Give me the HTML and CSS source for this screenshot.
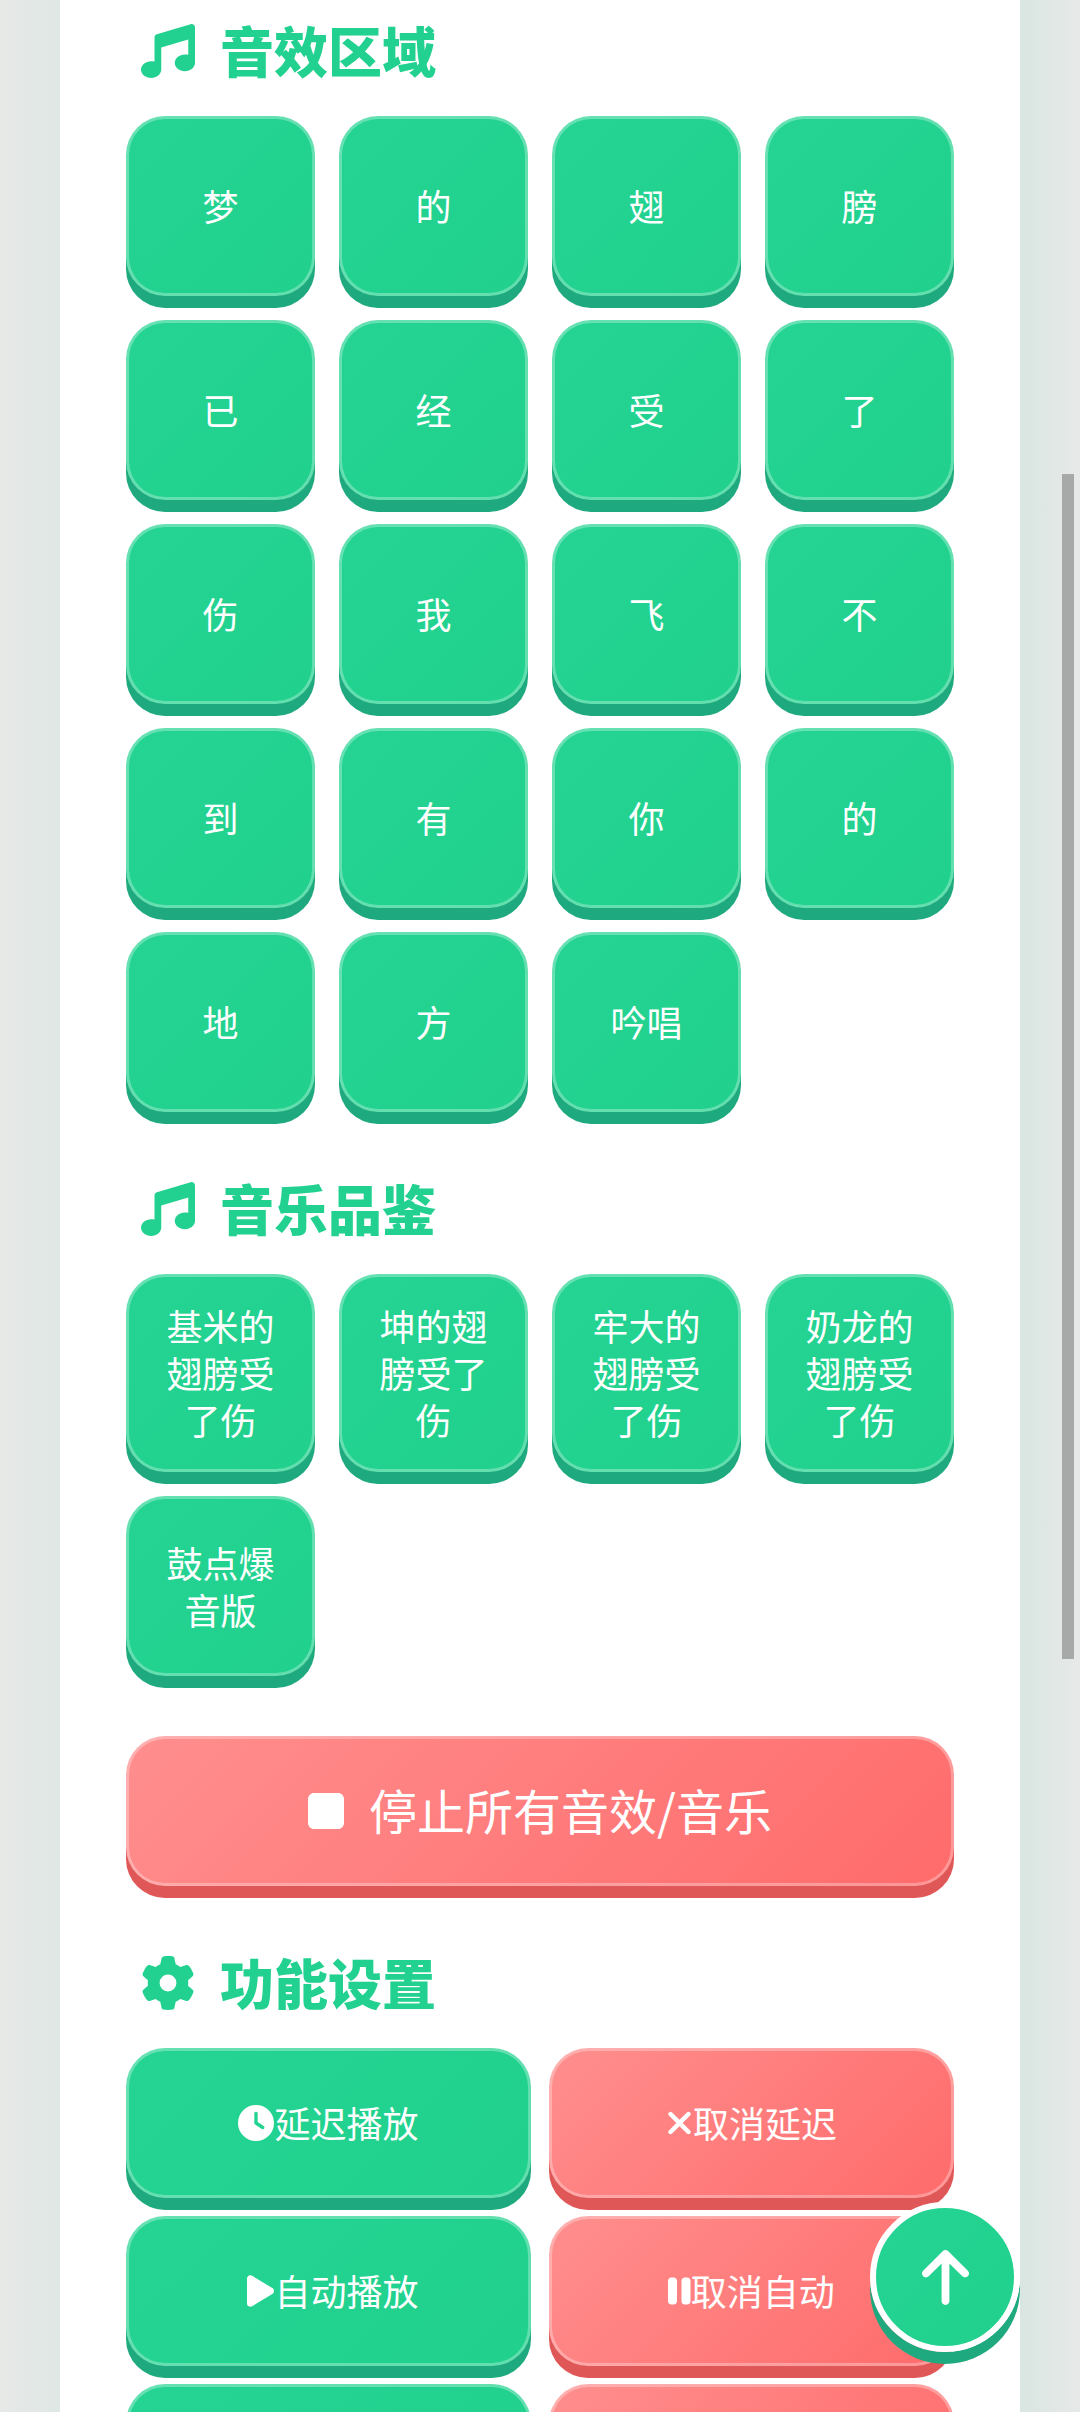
FILE: index.html
```html
<!DOCTYPE html>
<html lang="zh">
<head>
<meta charset="utf-8">
<title>音效</title>
<link rel="stylesheet" href="styles.css">
</head>
<body>
<main class="card">
  <section class="section">
    <h2 class="heading">
      <svg class="heading-icon" viewBox="0 0 512 512"><path d="M499.1 6.3c8.1 6 12.9 15.6 12.9 25.7v72V368c0 44.2-43 80-96 80s-96-35.8-96-80s43-80 96-80c11.2 0 22 1.6 32 4.6V147L192 223.8V432c0 44.2-43 80-96 80s-96-35.8-96-80s43-80 96-80c11.2 0 22 1.6 32 4.6V200 128c0-14.1 9.3-26.6 22.8-30.7l320-96c9.7-2.9 20.2-1.1 28.3 5z"/></svg>
      <span class="heading-text">音效区域</span>
    </h2>
    <div class="sound-grid">
      <button class="btn green">梦</button><button class="btn green">的</button><button class="btn green">翅</button><button class="btn green">膀</button>
      <button class="btn green">已</button><button class="btn green">经</button><button class="btn green">受</button><button class="btn green">了</button>
      <button class="btn green">伤</button><button class="btn green">我</button><button class="btn green">飞</button><button class="btn green">不</button>
      <button class="btn green">到</button><button class="btn green">有</button><button class="btn green">你</button><button class="btn green">的</button>
      <button class="btn green">地</button><button class="btn green">方</button><button class="btn green">吟唱</button>
    </div>
  </section>

  <section class="section section-tight">
    <h2 class="heading">
      <svg class="heading-icon" viewBox="0 0 512 512"><path d="M499.1 6.3c8.1 6 12.9 15.6 12.9 25.7v72V368c0 44.2-43 80-96 80s-96-35.8-96-80s43-80 96-80c11.2 0 22 1.6 32 4.6V147L192 223.8V432c0 44.2-43 80-96 80s-96-35.8-96-80s43-80 96-80c11.2 0 22 1.6 32 4.6V200 128c0-14.1 9.3-26.6 22.8-30.7l320-96c9.7-2.9 20.2-1.1 28.3 5z"/></svg>
      <span class="heading-text">音乐品鉴</span>
    </h2>
    <div class="sound-grid">
      <button class="btn green">基米的翅膀受了伤</button><button class="btn green">坤的翅膀受了伤</button><button class="btn green">牢大的翅膀受了伤</button><button class="btn green">奶龙的翅膀受了伤</button>
      <button class="btn green">鼓点爆音版</button>
    </div>
  </section>

  <button class="btn red stop">
    <svg class="stop-icon" viewBox="0 0 384 512"><path d="M0 128C0 92.7 28.7 64 64 64H320c35.3 0 64 28.7 64 64V384c0 35.3-28.7 64-64 64H64c-35.3 0-64-28.7-64-64V128z"/></svg>
    <span class="stop-text">停止所有音效/音乐</span>
  </button>

  <section class="section">
    <h2 class="heading">
      <svg class="heading-icon" viewBox="0 0 512 512"><path d="M495.9 166.6c3.2 8.7 .5 18.4-6.4 24.6l-43.3 39.4c1.1 8.3 1.7 16.8 1.7 25.4s-.6 17.1-1.7 25.4l43.3 39.4c6.9 6.2 9.6 15.9 6.4 24.6c-4.4 11.9-9.7 23.3-15.8 34.3l-4.7 8.1c-6.6 11-14 21.4-22.1 31.2c-5.9 7.2-15.7 9.6-24.5 6.8l-55.7-17.7c-13.4 10.3-28.2 18.9-44 25.4l-12.5 57.1c-2 9.1-9 16.3-18.2 17.8c-13.8 2.3-28 3.5-42.5 3.5s-28.7-1.2-42.5-3.5c-9.2-1.5-16.2-8.7-18.2-17.8l-12.5-57.1c-15.8-6.5-30.6-15.1-44-25.4L83.1 425.9c-8.8 2.8-18.6 .3-24.5-6.8c-8.1-9.8-15.5-20.2-22.1-31.2l-4.7-8.1c-6.1-11-11.4-22.4-15.8-34.3c-3.2-8.7-.5-18.4 6.4-24.6l43.3-39.4C64.6 273.1 64 264.6 64 256s.6-17.1 1.7-25.4L22.4 191.2c-6.9-6.2-9.6-15.9-6.4-24.6c4.4-11.9 9.7-23.3 15.8-34.3l4.7-8.1c6.6-11 14-21.4 22.1-31.2c5.9-7.2 15.7-9.6 24.5-6.8l55.7 17.7c13.4-10.3 28.2-18.9 44-25.4l12.5-57.1c2-9.1 9-16.3 18.2-17.8C227.3 1.2 241.5 0 256 0s28.7 1.2 42.5 3.5c9.2 1.5 16.2 8.7 18.2 17.8l12.5 57.1c15.8 6.5 30.6 15.1 44 25.4l55.7-17.7c8.8-2.8 18.6-.3 24.5 6.8c8.1 9.8 15.5 20.2 22.1 31.2l4.7 8.1c6.1 11 11.4 22.4 15.8 34.3zM256 336a80 80 0 1 0 0-160 80 80 0 1 0 0 160z"/></svg>
      <span class="heading-text">功能设置</span>
    </h2>
    <div class="func-grid">
      <button class="btn green func"><svg class="func-icon wide" viewBox="0 0 512 512"><path d="M256 0a256 256 0 1 1 0 512A256 256 0 1 1 256 0zM232 120V256c0 8 4 15.5 10.7 20l96 64c11 7.4 25.9 4.4 33.3-6.7s4.4-25.9-6.7-33.3L280 243.2V120c0-13.3-10.7-24-24-24s-24 10.7-24 24z"/></svg><span>延迟播放</span></button>
      <button class="btn red func"><svg class="func-icon" viewBox="0 0 384 512"><path d="M342.6 150.6c12.5-12.5 12.5-32.8 0-45.3s-32.8-12.5-45.3 0L192 210.7 86.6 105.4c-12.5-12.5-32.8-12.5-45.3 0s-12.5 32.8 0 45.3L146.7 256 41.4 361.4c-12.5 12.5-12.5 32.8 0 45.3s32.8 12.5 45.3 0L192 301.3 297.4 406.6c12.5 12.5 32.8 12.5 45.3 0s12.5-32.8 0-45.3L237.3 256 342.6 150.6z"/></svg><span>取消延迟</span></button>
      <button class="btn green func"><svg class="func-icon play" viewBox="0 0 384 512"><path d="M73 39c-14.8-9.1-33.4-9.4-48.5-.9S0 62.6 0 80V432c0 17.4 9.4 33.4 24.5 41.9s33.7 8.1 48.5-.9L361 297c14.3-8.7 23-24.2 23-41s-8.7-32.2-23-41L73 39z"/></svg><span>自动播放</span></button>
      <button class="btn red func"><svg class="func-icon narrow" viewBox="0 0 320 512"><path d="M48 64C21.5 64 0 85.5 0 112V400c0 26.5 21.5 48 48 48H80c26.5 0 48-21.5 48-48V112c0-26.5-21.5-48-48-48H48zm192 0c-26.5 0-48 21.5-48 48V400c0 26.5 21.5 48 48 48h32c26.5 0 48-21.5 48-48V112c0-26.5-21.5-48-48-48H240z"/></svg><span>取消自动</span></button>
      <button class="btn green func"></button>
      <button class="btn red func"></button>
    </div>
  </section>
</main>

<div class="scrollbar"></div>

<button class="to-top">
  <svg class="to-top-icon" viewBox="0 0 384 512"><path d="M214.6 41.4c-12.5-12.5-32.8-12.5-45.3 0l-160 160c-12.5 12.5-12.5 32.8 0 45.3s32.8 12.5 45.3 0L160 141.2V448c0 17.7 14.3 32 32 32s32-14.3 32-32V141.2L329.4 246.6c12.5 12.5 32.8 12.5 45.3 0s12.5-32.8 0-45.3l-160-160z"/></svg>
</button>
</body>
</html>
```

FILE: styles.css
```css
* {
  box-sizing: border-box;
}

html,
body {
  height: 2412px;
  margin: 0;
  overflow: hidden;
}

body {
  background: linear-gradient(to right, #e7e9e7 0, #dfe7e4 60px, #d9e6e2 1020px, #e7e9e8 1080px);
  font-family: "Noto Sans CJK SC", "Noto Sans", sans-serif;
}

.card {
  width: 960px;
  height: 2412px;
  margin: 0 auto 0 60px;
  padding: 24px 66px 0;
  background: #fff;
  overflow: hidden;
}

.section {
  margin-bottom: 70px;
}

.section-tight {
  margin-bottom: 60px;
}

.heading {
  display: flex;
  align-items: center;
  gap: 25px;
  height: 54px;
  margin: 0 0 38px;
  padding-left: 15px;
  color: #22d18f;
  font-size: 54px;
  font-weight: 900;
  line-height: 54px;
}

.heading-text {
  margin-bottom: 2px;
}

.heading-icon {
  width: 54px;
  height: 54px;
  fill: #22d18f;
  flex: none;
}

.sound-grid {
  display: grid;
  grid-template-columns: repeat(4, 189px);
  gap: 24px;
}

.func-grid {
  display: grid;
  grid-template-columns: repeat(2, 405px);
  gap: 18px;
}

.btn {
  display: flex;
  align-items: center;
  justify-content: center;
  min-height: 180px;
  padding: 25px 24px 26px;
  border: 3px solid rgba(255, 255, 255, 0.3);
  border-radius: 39px;
  background-origin: border-box;
  color: #fff;
  font-family: inherit;
  font-size: 36px;
  font-weight: 400;
  line-height: 47px;
  text-align: center;
}

.green {
  background-image: linear-gradient(135deg, #25d493, #20d08c);
  box-shadow: 0 12px 0 #1fa97e;
}

.red {
  background-image: linear-gradient(135deg, #ff8e8e, #ff6b6b);
  box-shadow: 0 12px 0 #e05757;
}

.func {
  min-height: 150px;
  padding: 0 10px 1px;
}

.func-icon {
  width: 27px;
  height: 36px;
  fill: #fff;
  flex: none;
}

.func-icon.wide {
  width: 36px;
}

.func-icon.narrow {
  width: 22.5px;
}

.func-icon.play {
  margin-left: 9px;
}

.stop {
  width: 828px;
  min-height: 150px;
  margin-bottom: 70px;
  padding: 0;
  gap: 25px;
  font-size: 48px;
}

.stop-text {
  margin-bottom: 3px;
}

.stop-icon {
  width: 36px;
  height: 48px;
  fill: #fff;
  flex: none;
}

.scrollbar {
  position: absolute;
  top: 474px;
  left: 1062px;
  width: 12px;
  height: 1185px;
  background: #a6a9a8;
}

.to-top {
  position: fixed;
  right: 60px;
  bottom: 60px;
  display: flex;
  align-items: center;
  justify-content: center;
  width: 150px;
  height: 150px;
  padding: 0;
  border: 6px solid #fff;
  border-radius: 50%;
  background: linear-gradient(135deg, #25d493, #20d08c);
  box-shadow: 0 12px 0 #1fa97e;
}

.to-top-icon {
  width: 47px;
  height: 63px;
  fill: #fff;
}
```
